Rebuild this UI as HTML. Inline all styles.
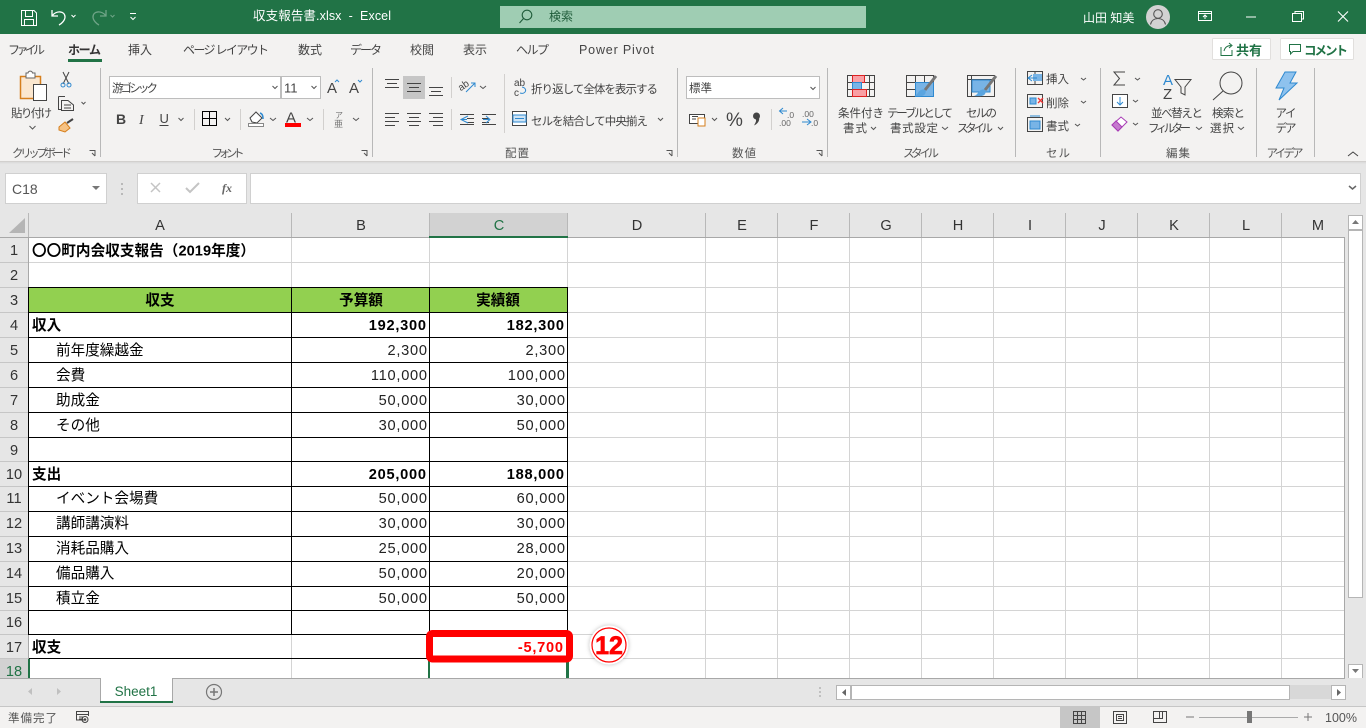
<!DOCTYPE html>
<html lang="ja"><head><meta charset="utf-8"><title>収支報告書.xlsx - Excel</title>
<style>
html,body{margin:0;padding:0;width:1366px;height:728px;overflow:hidden;background:#e6e6e6}
svg{display:block}
text{font-family:"Liberation Sans","Noto Sans CJK JP",sans-serif;white-space:pre}
.t{font-size:12px;fill:#444}
.tb{font-size:12px;fill:#fff}
.l{font-size:11.5px;fill:#444}
.g{font-size:11.5px;fill:#555;text-anchor:middle}
.m{text-anchor:middle}
.c{font-size:14.6px;fill:#000}
.b{font-weight:bold}
.n{font-size:14.6px;fill:#222;text-anchor:end;letter-spacing:.75px}
.nb{font-size:14.6px;fill:#000;font-weight:bold;text-anchor:end;letter-spacing:.75px}
.h{font-size:14.6px;fill:#333;text-anchor:middle}
.i{fill:none;stroke:#444;stroke-width:1}
.gl{stroke:#d4d4d4;stroke-width:1}
.bl{stroke:#000;stroke-width:1}
.sq{stroke:#b8b8b8;stroke-width:1}
.ch{fill:none;stroke:#555;stroke-width:1}
</style></head><body>
<svg width="1366" height="728" viewBox="0 0 1366 728" xmlns="http://www.w3.org/2000/svg">
<rect width="1366" height="728" fill="#e6e6e6"/>
<!-- title bar -->
<rect width="1366" height="34" fill="#217346"/>
<g fill="none" stroke="#fff" stroke-width="1">
<path d="M21.500 10.500H34L36.500 13V25.500H21.500Z"/><path d="M25.500 10.500V16.500H32.500V10.500M24.500 25.500V19.500H33.500V25.500"/>
<path d="M52 10V16H58M52.500 15.500C56 10.500 65 10.500 65 17C65 20 62 23.500 59 25" stroke-width="1.300"/>
<path d="M71.500 15L73.500 17L75.500 15"/>
<g opacity=".35"><path d="M106 10V16H100M105.500 15.500C102 10.500 93 10.500 93 17C93 20 96 23.500 99 25" stroke-width="1.300"/><path d="M110.500 15L112.500 17L114.500 15"/></g>
<path d="M130 13.500H136M130.500 17L133 19.500L135.500 17"/>
</g>
<text x="253" y="20" class="tb" style="font-size:12.500px" textLength="138">収支報告書.xlsx  -  Excel</text>
<rect x="500" y="6" width="366" height="22" fill="#9fcdb3"/>
<g fill="none" stroke="#1f5c3a" stroke-width="1.100"><circle cx="527" cy="15" r="4.800"/><path d="M523.500 18.500L519.500 23"/></g>
<text x="549" y="20.500" style="font-size:12px;fill:#1f5c3a">検索</text>
<text x="1083" y="22" class="tb">山田 知美</text>
<circle cx="1158" cy="17" r="12" fill="#d2d2d2"/>
<g fill="none" stroke="#555" stroke-width="1.100"><circle cx="1158" cy="14" r="4.300"/><path d="M1150.500 24.500C1151.500 20 1155 18.500 1158 18.500C1161 18.500 1164.500 20 1165.500 24.500"/></g>
<g fill="none" stroke="#fff" stroke-width="1">
<path d="M1198.500 11.500H1211.500V20.500H1198.500ZM1198.500 13.500H1211.500M1205 19V15M1203 17L1205 15L1207 17"/>
<path d="M1246 17H1256"/>
<path d="M1292.500 13.500H1301.500V21.500H1292.500ZM1295 13V11.500H1303.500V19H1301.500"/>
<path d="M1338 11.500L1348 21.500M1348 11.500L1338 21.500" stroke-width="1.100"/>
</g>
<!-- ribbon -->
<rect y="34" width="1366" height="127" fill="#f3f2f1"/>
<rect y="161" width="1366" height="1" fill="#d2d0ce"/>
<rect y="162" width="1366" height="1" fill="#dcdcdc"/>
<rect y="163" width="1366" height="1" fill="#e2e2e2"/>
<text x="8" y="54" class="t" textLength="37">ファイル</text>
<text x="68" y="54" class="t b" textLength="33" style="fill:#333">ホーム</text>
<rect x="68" y="59" width="34" height="3" fill="#217346"/>
<text x="128" y="54" class="t">挿入</text>
<text x="183" y="54" class="t" textLength="86">ページ レイアウト</text>
<text x="298" y="54" class="t">数式</text>
<text x="350" y="54" class="t" textLength="32">データ</text>
<text x="410" y="54" class="t">校閲</text>
<text x="463" y="54" class="t">表示</text>
<text x="516" y="54" class="t" textLength="33">ヘルプ</text>
<text x="579" y="54" class="t" textLength="75" style="font-size:12.500px">Power Pivot</text>
<!-- share/comment -->
<rect x="1212.500" y="38.500" width="58" height="21" rx="1" fill="#fff" stroke="#e1dfdd"/>
<path d="M1221 47V55.500H1232V50M1224 51C1225 47 1228 45.500 1231 45.500M1229 43L1232 45.500L1229 48" fill="none" stroke="#217346"/>
<text x="1236" y="55" style="font-size:13px;font-weight:bold;fill:#217346">共有</text>
<rect x="1280.500" y="38.500" width="73" height="21" rx="1" fill="#fff" stroke="#e1dfdd"/>
<path d="M1289.500 44.500H1300.500V51.500H1293L1290.500 54V51.500H1289.500Z" fill="none" stroke="#217346"/>
<text x="1304" y="55" style="font-size:12.500px;font-weight:bold;fill:#217346" textLength="44">コメント</text>
<!-- separators -->
<path class="sq" d="M100.500 68V157M372.500 68V157M677.500 68V157M827.500 68V157M1015.500 68V157M1100.500 68V157M1256.500 68V157M1314.500 68V157"/>
<path d="M194.500 109V130M240.500 109V130M323.500 109V130M451.500 77V98M451.500 109V130M504.500 74V133M771.500 109V130" stroke="#d2d0ce"/>
<!-- clipboard -->
<path d="M20.500 76.500H40.500V98.500H20.500Z" fill="#fbe7cf" stroke="#d67f1c" stroke-width="1.500"/>
<path d="M26 76V73H28C28.500 70.500 32 70.500 32.500 73H35V78H26Z" fill="#fff" stroke="#666"/>
<rect x="33.500" y="84.500" width="13" height="16" fill="#fff" stroke="#444"/>
<text x="31.500" y="117" class="l m" textLength="41">貼り付け</text>
<path class="ch" d="M29.500 126L32.500 129L35.500 126"/>
<path d="M63 72L69 84M69 72L63 84" fill="none" stroke="#444"/><circle cx="63" cy="85" r="2" fill="none" stroke="#2e89d0"/><circle cx="69" cy="85" r="2" fill="none" stroke="#2e89d0"/>
<path class="i" d="M58.500 96.500H65M58.500 96.500V109.500H61M61.500 100.500H68L73.500 105V110.500H61.500Z"/><path class="i" d="M64 105H71M64 108H71"/>
<path class="ch" d="M81.500 102L83.500 104L85.500 102"/>
<path d="M59 127L65 122L70 128L65 132L59 130Z" fill="#f6c283" stroke="#d67f1c"/><path d="M67 123L73 119" stroke="#444" stroke-width="2"/>
<text x="42" y="157" class="g" textLength="60">クリップボード</text>
<path class="ch" d="M89.500 150.500H95V156M92 153L95 156" stroke-width=".8"/>
<!-- font -->
<rect x="109.500" y="76.500" width="171" height="22" fill="#fff" stroke="#bdbdbd"/>
<text x="112" y="92" class="l" textLength="46">游ゴシック</text>
<path class="ch" d="M272.500 86L275 88.500L277.500 86"/>
<rect x="281.500" y="76.500" width="39" height="22" fill="#fff" stroke="#bdbdbd"/>
<text x="284" y="92.500" style="font-size:13px;fill:#444">11</text>
<path class="ch" d="M311.500 86L314 88.500L316.500 86"/>
<text x="327" y="93" style="font-size:15px;fill:#444">A</text><path d="M335 82L337 80L339 82" fill="none" stroke="#2e89d0"/>
<text x="349" y="93" style="font-size:15px;fill:#444">A</text><path d="M358 80L360 82L362 80" fill="none" stroke="#2e89d0"/>
<text x="116" y="124" style="font-size:14px;font-weight:bold;fill:#444">B</text>
<text x="139" y="124" style="font-size:14px;font-style:italic;font-family:'Liberation Serif',serif;fill:#444">I</text>
<text x="159.500" y="123" style="font-size:13px;fill:#444">U</text><path d="M159.500 125.500H168.500" stroke="#444"/>
<path class="ch" d="M178.500 118L181 120.500L183.500 118"/>
<path d="M202.500 111.500H216.500V125.500H202.500ZM209.500 111.500V125.500M202.500 118.500H216.500" fill="none" stroke="#000"/>
<path class="ch" d="M225 118L227.500 120.500L230 118"/>
<path d="M250 118L256 112L262 118L257 123L252 122Z" fill="#fff" stroke="#444"/><path d="M260 113C263 114 263 117 263 119" stroke="#2e89d0" stroke-width="1.500" fill="none"/>
<rect x="248.500" y="123.500" width="15" height="3" fill="#fff" stroke="#888"/>
<path class="ch" d="M270 118L273 120.500L276 118"/>
<text x="286" y="122.500" style="font-size:15px;fill:#444">A</text>
<rect x="285" y="123" width="16" height="4" fill="#f00"/>
<path class="ch" d="M307 118L310 120.500L313 118"/>
<text x="335" y="118" style="font-size:8px;fill:#777">ア</text><text x="334" y="127" style="font-size:9px;fill:#777">亜</text>
<path class="ch" d="M353 118L356 120.500L359 118"/>
<text x="228" y="157" class="g" textLength="33">フォント</text>
<path class="ch" d="M361.500 150.500H367V156M364 153L367 156" stroke-width=".8"/>
<!-- alignment -->
<rect x="403" y="76" width="22" height="23" fill="#c6c6c6"/>
<g fill="none" stroke="#444"><path d="M385 79.500H399M387 83.500H397M385 87.500H399"/><path d="M407 83.500H421M409 87.500H419M407 91.500H421"/><path d="M429 87.500H443M431 91.500H441M429 95.500H443"/>
<path d="M385 113.500H399M385 117.500H395M385 121.500H399M385 125.500H395"/><path d="M407 113.500H421M409 117.500H419M407 121.500H421M409 125.500H419"/><path d="M429 113.500H443M433 117.500H443M429 121.500H443M433 125.500H443"/>
<path d="M460 114.500H474M467 118.500H474M467 122.500H474M460 124.500H474"/><path d="M482 114.500H496M482 118.500H489M482 122.500H489M482 124.500H496"/></g>
<path d="M468 116L461 119.500L468 123M461 119.500H467" fill="none" stroke="#2e89d0"/><path d="M483 119.500H489M486 116L490 119.500L486 123" fill="none" stroke="#2e89d0"/>
<text x="459" y="90" style="font-size:10px;fill:#444" transform="rotate(-35 462 88)">ab</text><path d="M466 92L475 83M471 83H475V87" fill="none" stroke="#2e89d0"/>
<path class="ch" d="M480 86L483 88.500L486 86"/>
<text x="514" y="86" style="font-size:10px;fill:#444">ab</text><text x="514" y="96" style="font-size:10px;fill:#444">c</text><path d="M520 93C526 95 528 88 522 87" fill="none" stroke="#2e89d0"/>
<text x="531" y="93" class="l" textLength="127">折り返して全体を表示する</text>
<rect x="512.500" y="111.500" width="14" height="14" fill="#fff" stroke="#444"/><rect x="513" y="115" width="13" height="7" fill="#cfe4f5" stroke="#2e89d0"/><path d="M515 118.500H524" stroke="#2e89d0"/>
<text x="531" y="125" class="l" textLength="117">セルを結合して中央揃え</text>
<path class="ch" d="M658 118L660.500 120.500L663 118"/>
<text x="517" y="157" class="g" textLength="24">配置</text>
<path class="ch" d="M666.500 150.500H672V156M669 153L672 156" stroke-width=".8"/>
<!-- number -->
<rect x="686.500" y="76.500" width="133" height="22" fill="#fff" stroke="#bdbdbd"/>
<text x="689" y="92" class="l">標準</text>
<path class="ch" d="M810.500 87L813 89.500L815.500 87"/>
<rect x="689.500" y="114.500" width="15" height="9" fill="#fff" stroke="#444"/>
<path d="M692 116.500H698M692 119H696" stroke="#444"/>
<rect x="698" y="118" width="7" height="8" fill="#fff" stroke="#d67f1c"/>
<path class="ch" d="M712 118L714.500 120.500L717 118"/>
<text x="726" y="126" style="font-size:19px;fill:#444">%</text>
<circle cx="756.500" cy="116" r="3.500" fill="#444"/><path d="M758 116C761 119 758 124 754 125.500C756 122 757 120 755 118Z" fill="#444"/>
<path d="M787 111H780M783 108L779.500 111L783 114" fill="none" stroke="#2e89d0"/><text x="787" y="118" style="font-size:8.500px;fill:#666">.0</text><text x="779" y="126" style="font-size:8.500px;fill:#666">.00</text>
<text x="802" y="117" style="font-size:8.500px;fill:#666">.00</text><path d="M802 122H810M807 119L811 122L807 125" fill="none" stroke="#2e89d0"/><text x="811" y="126" style="font-size:8.500px;fill:#666">.0</text>
<text x="744" y="157" class="g" textLength="24">数値</text>
<path class="ch" d="M816.500 150.500H822V156M819 153L822 156" stroke-width=".8"/>
<!-- styles -->
<g fill="none" stroke="#444"><rect x="847.500" y="75.500" width="27" height="21"/><path d="M847.500 82.500H874.500M847.500 89.500H874.500M852.500 75.500V96.500M869.500 75.500V96.500"/></g>
<rect x="852.500" y="75.500" width="12" height="7" fill="#f9a0a5" stroke="#d22"/><rect x="852.500" y="82.500" width="9" height="7" fill="#78b4e6" stroke="#2e89d0"/><rect x="852.500" y="89.500" width="14" height="7" fill="#f9a0a5" stroke="#d22"/>
<text x="838" y="117" class="l" textLength="46">条件付き</text>
<text x="843" y="132" class="l" textLength="24">書式</text>
<path class="ch" d="M871 127L873.500 129.500L876 127"/>
<g fill="none" stroke="#444"><rect x="906.500" y="75.500" width="27" height="21"/><path d="M906.500 82.500H933.500M906.500 89.500H933.500M915.500 75.500V96.500M924.500 75.500V96.500"/></g>
<rect x="915.500" y="82.500" width="18" height="14" fill="#78b4e6" stroke="#2e89d0"/>
<path d="M936 76L925 90" stroke="#777" stroke-width="3"/><path d="M921 90C925 88 927 91 925 94C923 97 918 96 914 96C918 95 918 91 921 90Z" fill="#5aa5e0"/>
<text x="887" y="117" class="l" textLength="66">テーブルとして</text>
<text x="890" y="132" class="l" textLength="48">書式設定</text>
<path class="ch" d="M942 127L945 129.500L948 127"/>
<g fill="none" stroke="#444"><rect x="967.500" y="75.500" width="27" height="21"/><path d="M967.500 79.500H994.500M971.500 75.500V96.500"/></g>
<rect x="972" y="80" width="18" height="12" fill="#78b4e6" stroke="#2e89d0"/>
<path d="M996 76L985 90" stroke="#777" stroke-width="3"/><path d="M981 90C985 88 987 91 985 94C983 97 978 96 974 96C978 95 978 91 981 90Z" fill="#5aa5e0"/>
<text x="966" y="117" class="l" textLength="31">セルの</text>
<text x="957" y="132" class="l" textLength="36">スタイル</text>
<path class="ch" d="M998 127L1000.500 129.500L1003 127"/>
<text x="921" y="157" class="g" textLength="36">スタイル</text>
<!-- cells -->
<g fill="none" stroke="#444"><rect x="1027.500" y="71.500" width="15" height="13"/><path d="M1027.500 78H1042.500M1035 71.500V84.500"/>
<rect x="1027.500" y="94.500" width="15" height="13"/><rect x="1027.500" y="117.500" width="15" height="14"/></g>
<rect x="1033" y="74" width="9" height="7" fill="#78b4e6"/><path d="M1037 78H1029M1032 75L1028 78L1032 81" fill="none" stroke="#2e89d0"/>
<rect x="1030" y="98" width="6" height="6" fill="#78b4e6" stroke="#2e89d0"/><path d="M1038 98L1043 103M1043 98L1038 103" stroke="#e33" stroke-width="1.300"/>
<rect x="1030" y="121" width="10" height="8" fill="#78b4e6" stroke="#2e89d0"/><path d="M1030 116H1040" stroke="#2e89d0"/>
<text x="1046" y="83" class="l">挿入</text><path class="ch" d="M1081 78L1083.500 80L1086 78"/>
<text x="1046" y="107" class="l">削除</text><path class="ch" d="M1081 101L1083.500 103L1086 101"/>
<text x="1046" y="130" class="l">書式</text><path class="ch" d="M1075 124L1077.500 126L1080 124"/>
<text x="1058" y="157" class="g" textLength="24">セル</text>
<!-- editing -->
<path d="M1125 72H1114L1119.500 78.500L1114 85H1125" fill="none" stroke="#444"/><path class="ch" d="M1135 78L1137.500 80L1140 78"/>
<rect x="1112.500" y="94.500" width="15" height="13" fill="#fff" stroke="#444"/><path d="M1120 97V105M1117 102L1120 105L1123 102" fill="none" stroke="#2e89d0"/><path class="ch" d="M1133 100L1135.500 102L1138 100"/>
<path d="M1112 125L1121 117L1127 122L1118 131Z" fill="#fff" stroke="#a83bb5"/><path d="M1112 125L1116 121L1122 127L1118 131Z" fill="#c57ace" stroke="#a83bb5"/><path class="ch" d="M1133 123L1135.500 125L1138 123"/>
<text x="1163" y="85" style="font-size:15px;fill:#2e89d0">A</text><text x="1163" y="99" style="font-size:15px;fill:#444">Z</text>
<path d="M1175 79.500H1191L1185 87V95L1181 93V87Z" fill="none" stroke="#444"/>
<text x="1151" y="117" class="l" textLength="52">並べ替えと</text>
<text x="1148" y="132" class="l" textLength="43">フィルター</text><path class="ch" d="M1196 127L1199 129.500L1202 127"/>
<circle cx="1231" cy="83" r="11" fill="none" stroke="#444"/><path d="M1223 91L1213 100" stroke="#444"/>
<text x="1212" y="117" class="l" textLength="33">検索と</text>
<text x="1210" y="132" class="l" textLength="24">選択</text><path class="ch" d="M1238 127L1241 129.500L1244 127"/>
<text x="1178" y="157" class="g" textLength="24">編集</text>
<!-- ideas -->
<path d="M1285 72H1296L1290 83H1297L1279 100L1284 88H1276Z" fill="#8ec2ee" stroke="#2e89d0"/>
<text x="1286" y="117" class="l m" textLength="21">アイ</text>
<text x="1286" y="132" class="l m" textLength="21">デア</text>
<text x="1285" y="157" class="g" textLength="37">アイデア</text>
<path d="M1348 156L1353 152L1358 156" fill="none" stroke="#444"/>
<!-- formula row -->
<rect x="5.500" y="173.500" width="101" height="30" fill="#fff" stroke="#d0d0d0"/>
<text x="12" y="194" style="font-size:14px;fill:#555">C18</text>
<path d="M92 186H100L96 190Z" fill="#777"/>
<path d="M122 183V185M122 188V190M122 193V195" stroke="#aaa" stroke-width="1.500"/>
<rect x="137.500" y="173.500" width="109" height="30" fill="#fff" stroke="#d0d0d0"/>
<path d="M151 183L160 192M160 183L151 192" stroke="#c4c4c4" stroke-width="1.500"/>
<path d="M186 188L190 192L199 183" stroke="#c4c4c4" stroke-width="2" fill="none"/>
<text x="222" y="192" style="font-family:'Liberation Serif',serif;font-size:12px;font-style:italic;font-weight:bold;fill:#666">fx</text>
<rect x="250.500" y="173.500" width="1110" height="30" fill="#fff" stroke="#d0d0d0"/>
<path d="M1349 186L1352.500 189L1356 186" fill="none" stroke="#666" stroke-width="1.500"/>
<!-- headers -->
<rect x="429" y="213" width="139" height="24" fill="#d2d2d2"/>
<rect x="0" y="659" width="28" height="19" fill="#d2d2d2"/>
<path d="M25 218V233H9Z" fill="#b5b5b5"/>
<path d="M28.500 213V237M291.500 213V237M429.500 213V237M567.500 213V237M705.500 213V237M777.500 213V237M849.500 213V237M921.500 213V237M993.500 213V237M1065.500 213V237M1137.500 213V237M1209.500 213V237M1281.500 213V237" stroke="#b8b8b8"/>
<rect x="0" y="237" width="1345" height="1" fill="#a8a8a8"/>
<rect x="429" y="236" width="139" height="2" fill="#217346"/>
<g>
<text x="160" y="230" class="h">A</text><text x="361" y="230" class="h">B</text><text x="499" y="230" class="h" style="fill:#217346">C</text><text x="637" y="230" class="h">D</text><text x="742" y="230" class="h">E</text><text x="814" y="230" class="h">F</text><text x="886" y="230" class="h">G</text><text x="958" y="230" class="h">H</text><text x="1030" y="230" class="h">I</text><text x="1102" y="230" class="h">J</text><text x="1174" y="230" class="h">K</text><text x="1246" y="230" class="h">L</text><text x="1318" y="230" class="h">M</text>
</g>
<g>
<text x="14" y="255" class="h">1</text><text x="14" y="280" class="h">2</text><text x="14" y="305" class="h">3</text><text x="14" y="330" class="h">4</text><text x="14" y="355" class="h">5</text><text x="14" y="380" class="h">6</text><text x="14" y="405" class="h">7</text><text x="14" y="430" class="h">8</text><text x="14" y="455" class="h">9</text><text x="14" y="479" class="h">10</text><text x="14" y="503" class="h">11</text><text x="14" y="528" class="h">12</text><text x="14" y="553" class="h">13</text><text x="14" y="578" class="h">14</text><text x="14" y="603" class="h">15</text><text x="14" y="627" class="h">16</text><text x="14" y="652" class="h">17</text><text x="14" y="676" class="h" style="fill:#217346">18</text>
</g>
<!-- sheet -->
<rect x="29" y="238" width="1316" height="440" fill="#fff"/>
<rect x="0" y="238" width="28" height="1" fill="#e6e6e6"/>
<path d="M0 262.500H28M0 287.500H28M0 312.500H28M0 337.500H28M0 362.500H28M0 387.500H28M0 412.500H28M0 437.500H28M0 461.500H28M0 486.500H28M0 511.500H28M0 536.500H28M0 561.500H28M0 586.500H28M0 610.500H28M0 634.500H28M0 658.500H28" stroke="#c6c6c6"/>
<path d="M28.500 238V678" stroke="#a8a8a8"/>
<path class="gl" d="M29 262.500H1345M29 287.500H1345M29 312.500H1345M29 337.500H1345M29 362.500H1345M29 387.500H1345M29 412.500H1345M29 437.500H1345M29 461.500H1345M29 486.500H1345M29 511.500H1345M29 536.500H1345M29 561.500H1345M29 586.500H1345M29 610.500H1345M29 634.500H1345M29 658.500H1345"/>
<path class="gl" d="M291.500 238V678M429.500 238V678M567.500 238V678M705.500 238V678M777.500 238V678M849.500 238V678M921.500 238V678M993.500 238V678M1065.500 238V678M1137.500 238V678M1209.500 238V678M1281.500 238V678"/>
<path d="M1344.500 238V678" stroke="#a8a8a8"/>
<rect x="29" y="288" width="538" height="24" fill="#92d050"/>
<path class="bl" d="M29 287.500H568M29 312.500H568M29 337.500H568M29 362.500H568M29 387.500H568M29 412.500H568M29 437.500H568M29 461.500H568M29 486.500H568M29 511.500H568M29 536.500H568M29 561.500H568M29 586.500H568M29 610.500H568M29 634.500H568M29 658.500H430"/>
<path class="bl" d="M28.500 287V635M291.500 287V635M429.500 287V659M567.500 287V635"/>
<rect x="28" y="659" width="2" height="19" fill="#217346"/>
<rect x="428" y="659" width="2" height="19" fill="#217346"/>
<rect x="566" y="659" width="3" height="19" fill="#217346"/>
<text x="32" y="255.500" class="c b" textLength="223">〇〇町内会収支報告（2019年度）</text>
<text x="160" y="305" class="c b m">収支</text><text x="361" y="305" class="c b m">予算額</text><text x="498" y="305" class="c b m">実績額</text>
<text x="32" y="330" class="c b">収入</text><text x="426.800" y="330" class="nb">192,300</text><text x="564.800" y="330" class="nb">182,300</text>
<text x="56" y="355" class="c">前年度繰越金</text><text x="427.800" y="355" class="n">2,300</text><text x="565.800" y="355" class="n">2,300</text>
<text x="56" y="380" class="c">会費</text><text x="427.800" y="380" class="n">110,000</text><text x="565.800" y="380" class="n">100,000</text>
<text x="56" y="405" class="c">助成金</text><text x="427.800" y="405" class="n">50,000</text><text x="565.800" y="405" class="n">30,000</text>
<text x="56" y="430" class="c">その他</text><text x="427.800" y="430" class="n">30,000</text><text x="565.800" y="430" class="n">50,000</text>
<text x="32" y="479" class="c b">支出</text><text x="426.800" y="479" class="nb">205,000</text><text x="564.800" y="479" class="nb">188,000</text>
<text x="56" y="503" class="c">イベント会場費</text><text x="427.800" y="503" class="n">50,000</text><text x="565.800" y="503" class="n">60,000</text>
<text x="56" y="528" class="c">講師講演料</text><text x="427.800" y="528" class="n">30,000</text><text x="565.800" y="528" class="n">30,000</text>
<text x="56" y="553" class="c">消耗品購入</text><text x="427.800" y="553" class="n">25,000</text><text x="565.800" y="553" class="n">28,000</text>
<text x="56" y="578" class="c">備品購入</text><text x="427.800" y="578" class="n">50,000</text><text x="565.800" y="578" class="n">20,000</text>
<text x="56" y="603" class="c">積立金</text><text x="427.800" y="603" class="n">50,000</text><text x="565.800" y="603" class="n">50,000</text>
<text x="32" y="652" class="c b">収支</text>
<rect x="429.500" y="633.500" width="140" height="25.500" rx="3" fill="#fff" stroke="#f00" stroke-width="7"/>
<text x="563.800" y="652" class="nb" style="fill:#f00">-5,700</text>
<circle cx="609" cy="645" r="19.500" fill="#fff" style="filter:drop-shadow(0 0 2px rgba(0,0,0,.25))"/>
<circle cx="609" cy="645" r="17" fill="#fff" stroke="#f00" stroke-width="1.200"/>
<text x="609" y="654" class="m" style="font-size:25px;font-weight:bold;fill:#f00;stroke:#f00;stroke-width:.7">12</text>
<!-- vertical scrollbar -->
<rect x="1345" y="213" width="21" height="465" fill="#e6e6e6"/>
<rect x="1348.500" y="215.500" width="14" height="14" fill="#fff" stroke="#b5b5b5"/>
<path d="M1352 224H1359L1355.500 220Z" fill="#777"/>
<rect x="1348.500" y="230.500" width="14" height="367" fill="#fff" stroke="#b5b5b5"/>
<rect x="1348.500" y="664.500" width="14" height="14" fill="#fff" stroke="#b5b5b5"/>
<path d="M1352 669H1359L1355.500 673Z" fill="#777"/>
<!-- tab bar -->
<rect x="0" y="678" width="1366" height="29" fill="#e6e6e6"/>
<rect x="0" y="678" width="1345" height="1" fill="#a8a8a8"/>
<path d="M32 688V695L28 691.500ZM57 688V695L61 691.500Z" fill="#c0c0c0"/>
<path d="M100.500 702V678.500H172.500V702" fill="#fff" stroke="#a8a8a8"/>
<rect x="100" y="701" width="73" height="2" fill="#217346"/>
<rect x="101" y="678" width="71" height="2" fill="#fff"/>
<text x="136" y="696" class="m" style="font-size:13.500px;fill:#217346">Sheet1</text>
<circle cx="214" cy="692" r="7.500" fill="none" stroke="#777" stroke-width="1.200"/><path d="M214 688V696M210 692H218" stroke="#777" stroke-width="1.500"/>
<path d="M820 687V689M820 691V693M820 695V697" stroke="#999"/>
<rect x="836" y="685" width="509" height="14" fill="#d8d8d8"/>
<rect x="836.500" y="685.500" width="14" height="14" fill="#fff" stroke="#b5b5b5"/><path d="M846 689V696L842 692.500Z" fill="#666"/>
<rect x="851.500" y="685.500" width="438" height="14" fill="#fff" stroke="#b5b5b5"/>
<rect x="1331.500" y="685.500" width="14" height="14" fill="#fff" stroke="#b5b5b5"/><path d="M1337 689V696L1341 692.500Z" fill="#666"/>
<!-- status bar -->
<rect x="0" y="706" width="1366" height="1" fill="#c6c6c6"/>
<rect x="0" y="707" width="1366" height="21" fill="#f3f2f1"/>
<text x="8" y="722" style="font-size:11.500px;fill:#555" textLength="49">準備完了</text>
<path d="M85 720H76.500V711.500H88.500V716M76.500 714.500H88.500M79 717H83M79 719H83" fill="none" stroke="#444"/><circle cx="85" cy="719.500" r="3" fill="none" stroke="#444"/><circle cx="85" cy="719.500" r="1.300" fill="#444"/>
<rect x="1060" y="707" width="40" height="21" fill="#c6c6c6"/>
<path d="M1073.500 711.500H1085.500V723.500H1073.500ZM1077.500 711.500V723.500M1081.500 711.500V723.500M1073.500 715.500H1085.500M1073.500 719.500H1085.500" fill="none" stroke="#444"/>
<path d="M1113.500 711.500H1126.500V723.500H1113.500ZM1116.500 714.500H1123.500V720.500H1116.500ZM1118 716.500H1122M1118 718.500H1122" fill="none" stroke="#444"/>
<path d="M1153.500 711.500H1166.500V722.500H1153.500ZM1153.500 718.500H1159.500V711.500M1159.500 718.500H1162.500V711.500" fill="none" stroke="#444"/>
<path d="M1186 717H1194M1304 717H1312M1308 713V721" stroke="#777"/>
<path d="M1199 717.500H1298" stroke="#aaa"/>
<rect x="1247" y="711" width="5" height="12" fill="#777"/>
<text x="1325" y="722" style="font-size:12.500px;fill:#555">100%</text>
</svg>
</body></html>
